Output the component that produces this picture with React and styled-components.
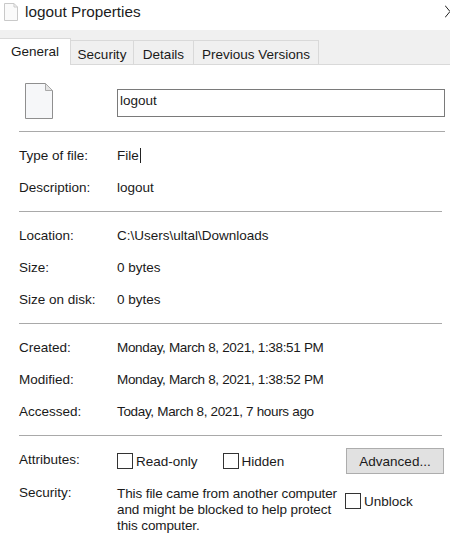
import React from "react";
import styled, { createGlobalStyle } from "styled-components";

const Global = createGlobalStyle`
  html, body { margin: 0; padding: 0; background: #fff; }
  body { font-family: "Liberation Sans", Arial, sans-serif; font-size: 13.5px; color: #1a1a1a; }
`;
const Window = styled.div`
  width: 450px; height: 541px; overflow: hidden; background: #fff; position: relative;
`;
const TitleBar = styled.div`
  height: 30px; display: flex; align-items: center; padding: 0 0 6px 4px; box-sizing: border-box; gap: 7px;
`;
const Title = styled.span`
  font-size: 15.3px; color: #1c1c1c;
`;
const Close = styled.svg`
  position: absolute; right: 0; top: 5px; width: 5px; height: 13px;
`;
const TabStrip = styled.div`
  height: 35px; box-sizing: border-box; background: #f0f0f0; border-bottom: 1px solid #d9d9d9;
  display: flex; align-items: flex-end; padding-top: 8px;
`;
const Tab = styled.div`
  box-sizing: border-box;
  height: ${p => (p.$active ? "27px" : "24px")};
  margin-bottom: ${p => (p.$active ? "-1px" : "0")};
  width: ${p => p.$w}px;
  background: ${p => (p.$active ? "#fff" : "#f0f0f0")};
  border: 1px solid #d9d9d9;
  border-left: ${p => (p.$first ? "none" : "0")};
  border-bottom: none;
  display: flex; align-items: center; justify-content: center;
  padding-bottom: ${p => (p.$active ? "2px" : "0")};
  padding-top: ${p => (p.$active ? "0" : "3px")};
`;
const Header = styled.div`
  height: 67px; margin: 0 5px 0 19px; box-sizing: border-box; border-bottom: 1px solid #a9a9a9;
  display: flex; align-items: flex-start; padding-top: 19px;
`;
const IconSlot = styled.div`
  width: 98px; padding-left: 6px; box-sizing: border-box; margin-top: -1px;
`;
const NameInput = styled.div`
  width: 328px; height: 28px; box-sizing: border-box; border: 1px solid #7a7a7a;
  padding: 0 2px 6px; display: flex; align-items: center; margin-top: 5px; margin-right: -1px;
`;
const Section = styled.div`
  margin: 0 8px 0 19px; padding: 7px 0 8px; border-bottom: 1px solid #a9a9a9;
`;
const Row = styled.div`
  height: 32px; display: flex; align-items: center;
`;
const Label = styled.div`
  width: 98px; flex: none;
`;
const Value = styled.div`
  display: flex; align-items: center; letter-spacing: ${p => p.$track || 0}px;
`;
const Caret = styled.span`
  display: inline-block; width: 1px; height: 15px; background: #222; margin-left: 1px;
`;
const AttrSection = styled.div`
  margin: 0 8px 0 19px; padding-top: 7px;
`;
const AttrRow = styled.div`
  display: flex; align-items: flex-start; height: 42px; padding-top: 3px; box-sizing: border-box;
`;
const AttrLabel = styled.div`
  width: 98px; flex: none; line-height: 17px; margin-top: ${p => p.$mt}px;
`;
const Check = styled.label`
  display: flex; align-items: center; gap: 3px; margin-right: ${p => p.$mr || 0}px; padding-top: ${p => p.$pt || 0}px;
`;
const Box = styled.span`
  width: 16px; height: 16px; box-sizing: border-box; border: 1px solid #333; background: #fff; display: block;
`;
const Advanced = styled.div`
  width: 98px; height: 26px; box-sizing: border-box; background: #e1e1e1; border: 1px solid #adadad;
  display: flex; align-items: center; justify-content: center; margin-left: auto; margin-right: -2px;
  margin-top: 2px;
`;
const SecurityRow = styled.div`
  display: flex; align-items: flex-start;
`;
const Note = styled.div`
  width: 228px; line-height: 16px; flex: none; margin-top: 1px; letter-spacing: -0.1px;
`;

function FileIcon() {
  return (
    <svg width="28" height="36" viewBox="0 0 28 36">
      <path d="M0.5 0.5H20.5L27.5 7.5V35.5H0.5Z" fill="#f6f7f9" stroke="#8f8f8f" />
      <path d="M20.5 0.5V7.5H27.5Z" fill="#e4e4e4" stroke="#a9a9a9" />
    </svg>
  );
}
function SmallFileIcon() {
  return (
    <svg width="14" height="18" viewBox="0 0 14 18">
      <path d="M0.5 0.5H10L13.5 4V17.5H0.5Z" fill="#fafafa" stroke="#c9c9c9" />
      <path d="M10 0.5V4H13.5" fill="none" stroke="#c9c9c9" />
    </svg>
  );
}

export default function App() {
  return (
    <Window>
      <Global />
      <TitleBar>
        <SmallFileIcon />
        <Title>logout Properties</Title>
        <Close viewBox="0 0 5 13"><path d="M0 0.5L5 6.5L0 12.5" fill="none" stroke="#222" strokeWidth="1" /></Close>
      </TitleBar>
      <TabStrip>
        <Tab $active $first $w={71}>General</Tab>
        <Tab $w={63}>Security</Tab>
        <Tab $w={60}>Details</Tab>
        <Tab $w={125}>Previous Versions</Tab>
      </TabStrip>
      <Header>
        <IconSlot><FileIcon /></IconSlot>
        <NameInput>logout</NameInput>
      </Header>
      <Section>
        <Row><Label>Type of file:</Label><Value>File<Caret /></Value></Row>
        <Row><Label>Description:</Label><Value>logout</Value></Row>
      </Section>
      <Section>
        <Row><Label>Location:</Label><Value>C:\Users\ultal\Downloads</Value></Row>
        <Row><Label>Size:</Label><Value>0 bytes</Value></Row>
        <Row><Label>Size on disk:</Label><Value>0 bytes</Value></Row>
      </Section>
      <Section>
        <Row><Label>Created:</Label><Value $track={-0.33}>Monday, March 8, 2021, 1:38:51 PM</Value></Row>
        <Row><Label>Modified:</Label><Value $track={-0.33}>Monday, March 8, 2021, 1:38:52 PM</Value></Row>
        <Row><Label>Accessed:</Label><Value $track={-0.33}>Today, March 8, 2021, 7 hours ago</Value></Row>
      </Section>
      <AttrSection>
        <AttrRow>
          <AttrLabel $mt={5}>Attributes:</AttrLabel>
          <Check $mr={25} $pt={7}><Box />Read-only</Check>
          <Check $pt={7}><Box />Hidden</Check>
          <Advanced>Advanced...</Advanced>
        </AttrRow>
        <SecurityRow>
          <AttrLabel $mt={-1}>Security:</AttrLabel>
          <Note>This file came from another computer and might be blocked to help protect this computer.</Note>
          <Check $pt={8}><Box />Unblock</Check>
        </SecurityRow>
      </AttrSection>
    </Window>
  );
}
